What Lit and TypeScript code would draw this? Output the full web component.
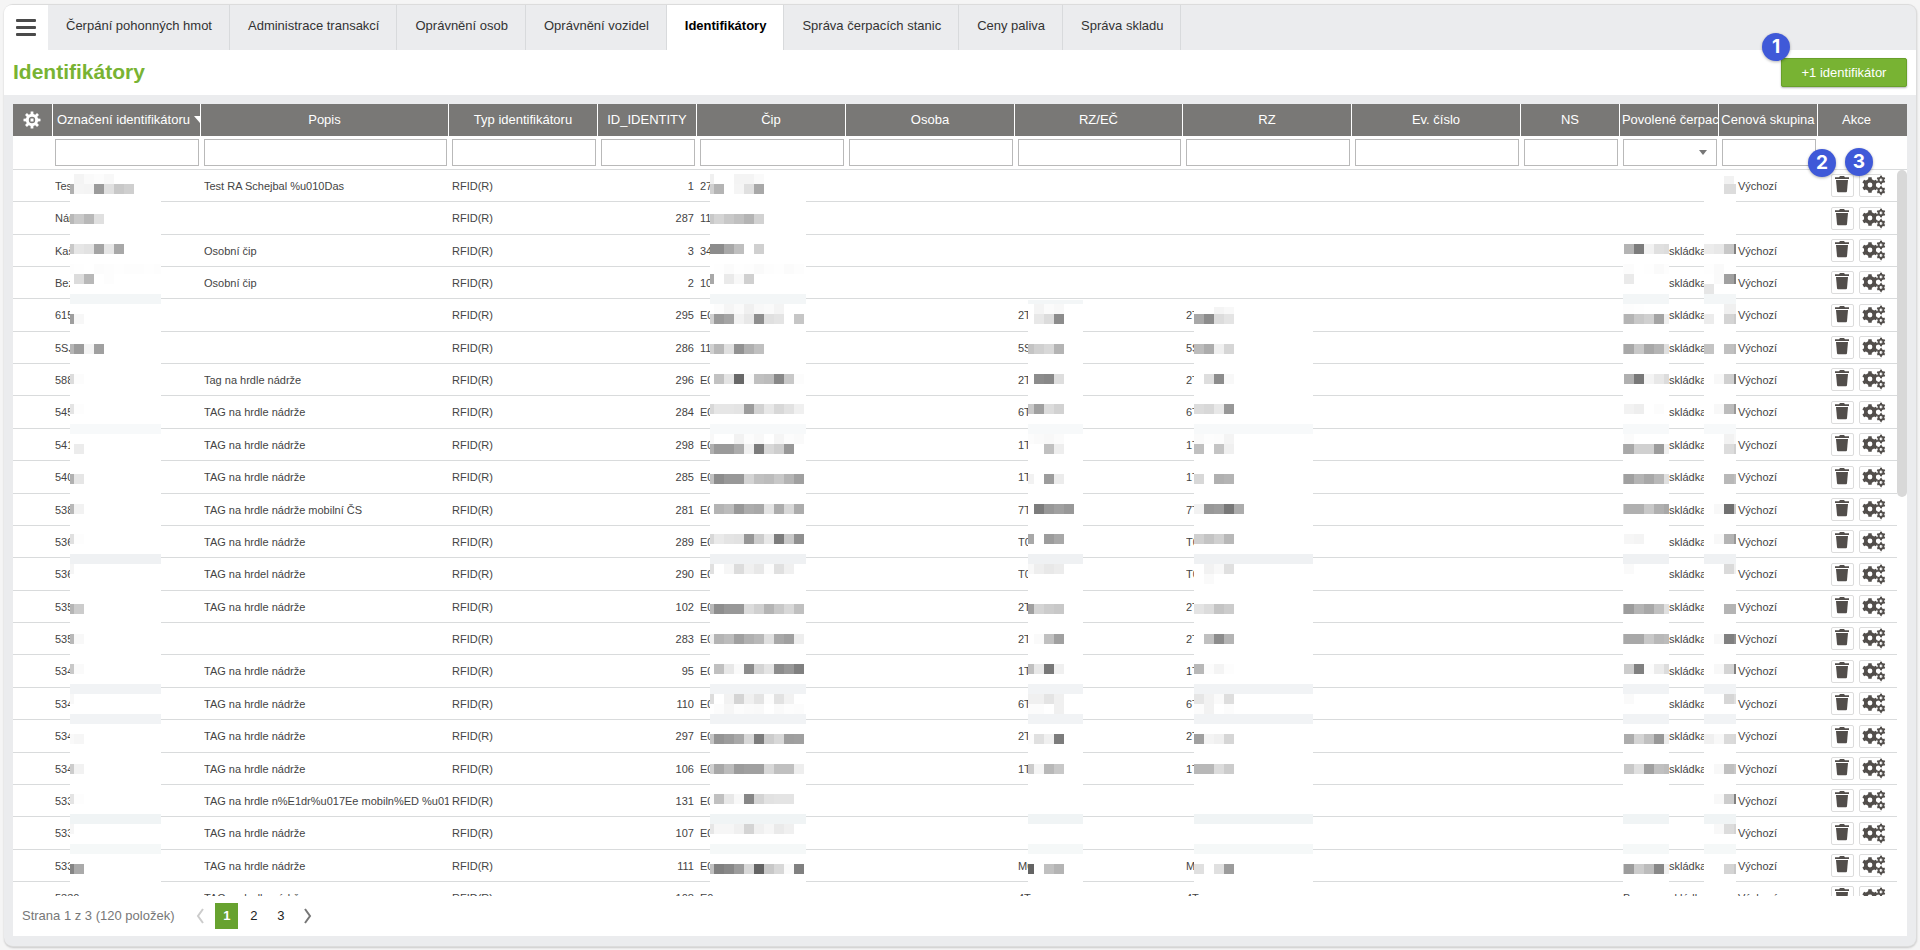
import { LitElement, html, svg, css, nothing } from "lit";
import { customElement, property } from "lit/decorators.js";
import { classMap } from "lit/directives/class-map.js";

interface Column {
  key: string;
  label: string;
  width: number;
  filter?: "text" | "select";
  sorted?: boolean;
}

const COLUMNS: Column[] = [
  { key: "gear", label: "", width: 40 },
  { key: "name", label: "Označení identifikátoru", width: 148, filter: "text", sorted: true },
  { key: "note", label: "Popis", width: 248, filter: "text" },
  { key: "type", label: "Typ identifikátoru", width: 149, filter: "text" },
  { key: "id", label: "ID_IDENTITY", width: 99, filter: "text" },
  { key: "chip", label: "Čip", width: 149, filter: "text" },
  { key: "person", label: "Osoba", width: 169, filter: "text" },
  { key: "plateNo", label: "RZ/EČ", width: 168, filter: "text" },
  { key: "plate", label: "RZ", width: 169, filter: "text" },
  { key: "evid", label: "Ev. číslo", width: 169, filter: "text" },
  { key: "ns", label: "NS", width: 99, filter: "text" },
  { key: "fuel", label: "Povolené čerpací stanice", width: 99, filter: "select" },
  { key: "price", label: "Cenová skupina", width: 99, filter: "text" },
  { key: "actions", label: "Akce", width: 89 },
];
const TOTAL = COLUMNS.reduce((sum, c) => sum + c.width, 0);

const TABS = [
  "Čerpání pohonných hmot",
  "Administrace transakcí",
  "Oprávnění osob",
  "Oprávnění vozidel",
  "Identifikátory",
  "Správa čerpacích stanic",
  "Ceny paliva",
  "Správa skladu",
];

const TAG = "TAG na hrdle nádrže";

// name, note, id, chip, plate, has station, has price group
type Row = [string, string, number, string, string, boolean, boolean];
const ROWS: Row[] = [
  ["Tes", "Test RA Schejbal %u010Das", 1, "27", "", false, true],
  ["Nár", "", 287, "11", "", false, false],
  ["Kaš", "Osobní čip", 3, "34", "", true, true],
  ["Bez", "Osobní čip", 2, "10", "", true, true],
  ["615", "", 295, "E0", "2T", true, true],
  ["5SJ", "", 286, "11", "5S", true, true],
  ["588", "Tag na hrdle nádrže", 296, "E0", "2T", true, true],
  ["545", TAG, 284, "E0", "6T", true, true],
  ["541", TAG, 298, "E0", "1T", true, true],
  ["540", TAG, 285, "E0", "1T", true, true],
  ["538", TAG + " mobilní ČS", 281, "E0", "7T", true, true],
  ["536", TAG, 289, "E0", "T0", true, true],
  ["536", "TAG na hrdel nádrže", 290, "E0", "T0", true, true],
  ["535", TAG, 102, "E0", "2T", true, true],
  ["535", "", 283, "E0", "2T", true, true],
  ["534", TAG, 95, "E0", "1T", true, true],
  ["534", TAG, 110, "E0", "6T", true, true],
  ["534", TAG, 297, "E0", "2T", true, true],
  ["534", TAG, 106, "E0", "1T", true, true],
  ["533", "TAG na hrdle n%E1dr%u017Ee mobiln%ED %u010CS", 131, "E0", "", false, true],
  ["533", TAG, 107, "E0", "", false, true],
  ["533", TAG, 111, "E0", "M0", true, true],
  ["5330", TAG, 108, "E0", "4T", true, true],
];

// Pixelated privacy masks. x is the offset inside the column, top the offset from
// the first row, first the width of the leading partial block, lines the grey levels.
interface Mask {
  x: number;
  top: number;
  width: number;
  first: number;
  lines: string;
}
const MASK_BOTTOM = 724;
const STRIPS: [number, string][] = [
  [124, "#f3f6f7"],
  [254, "#f7f9fa"],
  [384, "#eff1f3"],
  [514, "#f1f3f5"],
  [544, "#f1f3f5"],
  [644, "#f0f4f5"],
  [674, "#f5f8f8"],
];

const MASKS: Record<string, Mask> = {
  name: {
    x: 17, top: 4, width: 91, first: 4,
    lines: `4 ff f4 fa fc f8|14 b0 f5 f4 9b e0 c8 cf|44 b8 c9 b8 e0|74 c8 e6 e2 a4 e6 a8
|94 fd fe ff fc fd fe fd fd fe fd|104 ff dc b8 ff fd|144 9e f7|174 b5 9c f4 a0|204 dc fc|234 e4 fd|274 ff ec|304 b0 e6|334 b8 f2
|364 e0 fd|394 f5|434 b5 cc|464 b8 f8|494 c8 fa|524 f8|564 f9 f6|594 cc f2|624 e4 fd|654 f6|694 85 aa`,
  },
  chip: {
    x: 13, top: 4, width: 96, first: 4,
    lines: `4 f0 ff ff f4 f4 fa|14 d0 b4 ff f5 e0 a8|44 c8 d4 c8 c0 b4 d2|74 8c 8c a8 bf ff d0
|94 ff fe fb fe fd fa fd fe fb fd|104 a8 ff ea f8 d0|134 ff fc f5 fa f0 f8 fa f4|144 d0 9a a4 f2 e8 8e e0 e4 ff c6
|174 d0 b8 e0 92 b0 c0|204 ff c2 e4 68 fa c0 bc 88 c8 fc|234 d8 e6 e6 e4 9c d2 e8 d8 e2 f0
|264 f8 ff ff f2 fc f8 ff f5 fc fa|274 b0 9a 9a ac f0 7c d8 ce 98|304 c0 8c 98 98 d4 c0 bc c8 b4 a0
|334 ff b4 bc 98 ac a8 e4 ac d8 ac|364 d8 ea e4 e2 96 cc e8 7c c8 90|394 e0 ff f6 dc f0 e8 fc e0 f0
|434 b8 8e 98 98 dc d0 b4 c8 d8 c0|464 f0 b4 bc a0 b0 b8 e0 a8 a0 ee|494 ff c0 e8 fa 8c d4 e4 8c 98 80
|524 dc ff f2 d4 f0 e4 fc e2 f2|534 ff fc f6 fc fa f9 ff fa fd fc|564 c4 94 9c a8 d8 7c cc d8 9e a0
|594 d0 a8 bc 9c a0 a0 d8 c0 c0 ee|624 fa c0 e8 f8 86 d4 e2 e4 e4|654 e6 f6 f6 f0 d4 f0 f6 ea f0
|694 c0 80 88 9c d8 64 c8 d8 fa 80`,
  },
  plateNo: {
    x: 13, top: 130, width: 55, first: 6,
    lines: `134 ff f4 fb f8|144 ff e8 dc 8c|174 c4 d0 d8 b4|204 ff 8c 88 de|234 c8 a0 dc d2|264 fc fa f8 fb
|274 ff ff c0 ee|304 f2 ff 9c ec|334 ff 7c 98 a0 98|364 a8 ff 9c a8|394 f8 ee e8 ec|434 a0 d4 cc c8|464 ff fa c0 a0
|494 c0 e8 78 f0|524 f0 f0 e4 f0|534 fc fc ff f0|564 fc e0 f0 7c|594 cc f5 b8 c8|694 64 ff c0 b4`,
  },
  plate: {
    x: 11, top: 136, width: 119, first: 10,
    lines: `137 ff ff f4 f8|144 a8 8c dc e4|174 bc ac f0 d6|204 ff de 8c f8|234 dc d8 e8 98|264 fa fd fc f4
|274 c0 ff c4 f0|304 d8 ff b0 b4|334 f2 98 9c 78 ac|364 d0 c4 d0 b8|394 ff f2 f8 e0|404 ff fa|434 e4 dc c4 cc
|464 ff c0 8c b4|494 b8 fc f4 fd|524 e6 f2 fa de|534 fc f2 ff fc|564 a0 f4 f0 d6|594 b8 b8 dc cc|694 e0 ff e0 9c`,
  },
  fuel: {
    x: 3, top: 68, width: 46, first: 1,
    lines: `74 ff b4 7c f2 e0 dd|94 fd fc ff fe fa fd|104 ff ea|134 fd fd fe|144 e0 b4 c8 d0 a4 f0|174 c8 a8 c8 a8 b4 e0
|204 ff b0 78 f4 e8 dc|234 ff f2 ee ff fc|264 ff fb|274 b0 a8 d0 d0 9c f0|304 c0 a0 b4 a8 b8 e0|334 d0 b0 b0 c8 b0 a8
|364 ff f6 f4|394 ff fa|434 c0 9c b4 a8 c0 e0|464 c0 a8 a8 c8 b8 bc|494 ff cc 80 fc ec dc|524 ff fa
|564 ff ac d4 c0 98 ec|594 ff c8 e0 a0 c0 bc|694 d0 9c cc bc 88 f0`,
  },
  price: {
    x: -15, top: 6, width: 32, first: 10,
    lines: `6 ff ff f2|14 ff ff dc dc|74 ec e8 c8 80|94 fe fa ff|104 ff fa a0 80|114 e6|134 ff ff f0 f0|144 ec ff d4 cc
|174 c4 ff c0 b8|204 ff f8 d0 80|234 ff f8 bc 98|264 ff ff f2 f8|274 ff ff dc d0|304 ff ff b8 c0|334 ff f8 70 c8
|364 ff f8 b4 98|394 ff ff da f0|434 ff ff b4 b4|464 ff f8 80 90|494 ff f8 d4 80|524 ff ff d6 e0|564 f0 f8 da d8
|594 ff f8 c0 c8|624 ff f8 cc 80|654 ff f8 dc d4|694 ff ff d4 c8`,
  },
};

function gearPath(cx: number, cy: number, tip: number, root: number, hole: number, teeth: number): string {
  const step = (Math.PI * 2) / teeth;
  const at = (r: number, a: number) => `${(cx + r * Math.sin(a)).toFixed(2)} ${(cy - r * Math.cos(a)).toFixed(2)}`;
  let d = "";
  for (let i = 0; i < teeth; i++) {
    const a = i * step;
    d += `${i ? "L" : "M"}${at(root, a - step * 0.3)}L${at(tip, a - step * 0.2)}L${at(tip, a + step * 0.2)}L${at(root, a + step * 0.3)}`;
  }
  return `${d}ZM${cx - hole} ${cy}a${hole} ${hole} 0 1 0 ${hole * 2} 0a${hole} ${hole} 0 1 0 ${-hole * 2} 0Z`;
}

const SETTINGS_PATH = gearPath(9, 9, 8.6, 6.2, 3.2, 8);
const COGS_PATH =
  gearPath(8, 10, 8, 6.1, 2.4, 6) + gearPath(19, 5, 4.4, 3.4, 1.4, 6) + gearPath(19, 15.5, 4.4, 3.4, 1.4, 6);

@customElement("pixel-mask")
export class PixelMask extends LitElement {
  @property({ attribute: false }) mask!: Mask;

  static styles = css`
    :host {
      position: absolute;
      z-index: 1;
      display: block;
      pointer-events: none;
    }
    svg {
      display: block;
    }
  `;

  render() {
    const { top, width, first, lines } = this.mask;
    const height = MASK_BOTTOM - top;
    return html`<svg
      width=${width}
      height=${height}
      viewBox="0 ${top} ${width} ${height}"
      shape-rendering="crispEdges"
      aria-hidden="true"
    >
      <rect x="0" y=${top} width=${width} height=${height} fill="#fff"></rect>
      ${STRIPS.filter(([y]) => y >= top).map(
        ([y, fill]) => svg`<rect x="0" y=${y} width=${width} height="10" fill=${fill}></rect>`,
      )}
      ${top === 130 ? svg`<rect x="0" y="130" width=${width} height="4" fill="#f3f6f7"></rect>` : nothing}
      ${lines.split("|").map((line) => {
        const [y, ...levels] = line.trim().split(" ");
        return levels.map((g, i) =>
          g === "ff"
            ? nothing
            : svg`<rect x=${i === 0 ? 0 : first + (i - 1) * 10} y=${y} width=${i === 0 ? first : 10} height="10" fill=${`#${g}${g}${g}`}></rect>`,
        );
      })}
    </svg>`;
  }
}

@customElement("app-root")
export class AppRoot extends LitElement {
  static styles = css`
    :host {
      display: block;
      box-sizing: border-box;
      height: 100vh;
      padding: 4px 3px 3px 4px;
      background: #f5f5f5;
      font-family: "Liberation Sans", Arial, sans-serif;
      font-size: 13px;
      line-height: 16px;
      color: #444;
    }
    *,
    *::before {
      box-sizing: border-box;
    }
    button,
    input,
    select {
      font: inherit;
      color: inherit;
      margin: 0;
      padding: 0;
    }
    .card {
      display: flex;
      flex-direction: column;
      height: 100%;
      background: #ebecee;
      border: 1px solid #dcdcdc;
      border-left: 0;
      border-radius: 9px;
      box-shadow: 0 1px 2px rgba(0, 0, 0, 0.18);
    }
    .tabs {
      display: flex;
      flex: none;
      height: 45px;
    }
    .menu {
      flex: none;
      display: grid;
      place-items: center;
      width: 44px;
      border: 0;
      border-radius: 8px 0 0 0;
      background: #fff;
      color: #4a4a4a;
    }
    .menu svg {
      display: block;
      margin-right: 10px;
      margin-left: 10px;
    }
    .tab {
      padding: 13px 17px 0 18px;
      border-right: 1px solid #d8dadc;
      color: #333;
      text-decoration: none;
      white-space: nowrap;
    }
    .tab.active {
      background: #fff;
      color: #000;
      font-weight: bold;
    }
    .titlebar {
      display: flex;
      flex: none;
      align-items: center;
      justify-content: space-between;
      height: 45px;
      padding: 0 9px;
      background: #fff;
    }
    h1 {
      margin: 0;
      padding-bottom: 2px;
      font-size: 21px;
      line-height: 26px;
      color: #78b333;
    }
    .add-wrap {
      position: relative;
    }
    .add {
      display: block;
      width: 126px;
      height: 29px;
      border: 1px solid #68a02a;
      border-radius: 2px;
      background: #78b333;
      color: #fff;
      box-shadow: 0 1px 2px rgba(0, 0, 0, 0.3);
    }
    .badge {
      position: absolute;
      z-index: 3;
      width: 28px;
      height: 28px;
      border-radius: 50%;
      background: #3f59d8;
      color: #fff;
      font: bold 19px/28px Inter, sans-serif;
      text-align: center;
      box-shadow: 0 1px 3px rgba(0, 0, 0, 0.3);
    }
    .badge-add {
      left: -19px;
      top: -25px;
    }
    .badge-delete {
      left: -10px;
      top: 13px;
    }
    .badge-config {
      left: 27px;
      top: 12px;
    }
    .panel {
      display: flex;
      flex: 1;
      flex-direction: column;
      min-height: 0;
      margin: 9px 9px 10px;
      background: #fff;
    }
    table {
      width: 100%;
      table-layout: fixed;
      border-collapse: separate;
      border-spacing: 0;
    }
    .head {
      flex: none;
    }
    th,
    td {
      padding: 0;
      font-weight: normal;
    }
    .labels th {
      height: 32px;
      padding: 0 2px 1px;
      border-right: 1px solid #fff;
      background: #797876;
      color: #fff;
      overflow: hidden;
      white-space: nowrap;
      text-align: center;
    }
    .labels th:last-child {
      padding-right: 14px;
      border-right: 0;
    }
    .sorted {
      display: flex;
      align-items: center;
      gap: 4px;
      padding-left: 2px;
    }
    .sorted svg {
      flex: none;
    }
    .settings {
      display: grid;
      place-items: center;
      width: 100%;
      border: 0;
      background: none;
      color: #fff;
    }
    .filters td {
      position: relative;
      height: 34px;
      padding: 3px 2px 3px 3px;
      border-bottom: 1px solid #d9dbdc;
      vertical-align: top;
    }
    .filters td:nth-child(2) {
      padding-left: 2px;
    }
    .filters input,
    .filters select {
      display: block;
      width: 100%;
      height: 27px;
      padding: 0 4px;
      border: 1px solid #b9b9b9;
      border-radius: 0;
      background: #fff;
      appearance: none;
    }
    .caret {
      position: absolute;
      right: 12px;
      top: 14px;
      pointer-events: none;
    }
    .scroller {
      position: relative;
      flex: 1;
      min-height: 0;
      overflow: hidden;
    }
    .track {
      position: absolute;
      z-index: 2;
      top: 0;
      right: 0;
      bottom: 0;
      width: 10px;
      background: #fff;
    }
    .thumb {
      height: 45%;
      border-radius: 5px;
      background: #d8d8d8;
    }
    .body {
      font-size: 11px;
      line-height: 14px;
    }
    .body td {
      position: relative;
      height: 32px;
      border-bottom: 1px solid #d9dbdc;
      padding-left: 3px;
      white-space: nowrap;
    }
    .body tr:nth-child(8n + 2) td,
    .body tr:nth-child(8n + 5) td,
    .body tr:nth-child(8n + 8) td {
      height: 33px;
    }
    .text {
      overflow: hidden;
    }
    .body .name {
      padding-left: 2px;
    }
    .body .id {
      padding-right: 3px;
      text-align: right;
    }
    .lead {
      display: inline-block;
      width: 16px;
    }
    .lead.wide {
      width: 46px;
    }
    .body .actions {
      padding-left: 13px;
    }
    .buttons {
      display: flex;
      gap: 5px;
    }
    .icon {
      display: flex;
      justify-content: center;
      width: 23px;
      height: 23px;
      border: 1px solid #dcdcdc;
      border-radius: 2px;
      background: #fff;
      color: #524e4b;
    }
    .icon svg {
      flex: none;
      display: block;
    }
    .icon.config {
      justify-content: flex-start;
      padding-left: 2px;
    }
    .footer {
      display: flex;
      flex: none;
      align-items: center;
      height: 40px;
      padding-left: 9px;
      color: #777;
    }
    .pages {
      display: flex;
      gap: 4px;
      margin-left: 14px;
    }
    .pages button {
      display: grid;
      place-items: center;
      width: 23px;
      height: 26px;
      border: 0;
      background: none;
      color: #222;
    }
    .pages .current {
      background: #67a22f;
      color: #fff;
      font-weight: bold;
    }
  `;

  private cols() {
    return html`<colgroup>
      ${COLUMNS.map((c) => html`<col style="width:${(c.width / TOTAL) * 100}%" />`)}
    </colgroup>`;
  }

  private label(c: Column) {
    if (c.key === "gear")
      return html`<button class="settings" aria-label="Nastavení">
        <svg width="18" height="18" viewBox="0 0 18 18" fill="currentColor">
          <path fill-rule="evenodd" d=${SETTINGS_PATH}></path>
          <rect x="7.5" y="7.5" width="3" height="3"></rect>
        </svg>
      </button>`;
    if (c.sorted)
      return html`<div class="sorted">
        ${c.label}<svg width="12" height="7" viewBox="0 0 12 7" fill="currentColor"><path d="M0 0H12L6 7Z"></path></svg>
      </div>`;
    return c.label;
  }

  private filter(c: Column) {
    if (c.key === "actions")
      return html`<span class="badge badge-delete">2</span><span class="badge badge-config">3</span>`;
    if (c.filter === "select")
      return html`<select aria-label=${c.label}>
          <option></option>
        </select>
        <svg class="caret" width="8" height="5" viewBox="0 0 8 5"><path d="M0 0H8L4 5Z" fill="#777"></path></svg>`;
    return c.filter ? html`<input type="text" aria-label=${c.label} />` : nothing;
  }

  private cell(c: Column, row: Row) {
    const [name, note, id, chip, plate, station, price] = row;
    switch (c.key) {
      case "name":
        return name;
      case "note":
        return note;
      case "type":
        return "RFID(R)";
      case "id":
        return id;
      case "chip":
        return chip;
      case "plateNo":
      case "plate":
        return plate;
      case "fuel":
        return station ? html`<span class="lead wide">B</span>skládka` : "";
      case "price":
        return price ? html`<span class="lead"></span>Výchozí` : "";
      default:
        return "";
    }
  }

  private actions() {
    return html`<div class="buttons">
      <button class="icon" aria-label="Smazat">
        <svg width="16" height="18" viewBox="0 0 16 18" fill="currentColor">
          <path d="M1 2.2H5L6 1H10L11 2.2H15V4H1Z"></path>
          <path d="M2 5H14L13 16.2Q12.900 17.200 12 17.200H4Q3.100 17.200 3 16.200Z"></path>
        </svg>
      </button>
      <button class="icon config" aria-label="Konfigurace">
        <svg width="24" height="21" viewBox="0 0 24 21" fill="currentColor">
          <path fill-rule="evenodd" d=${COGS_PATH}></path>
        </svg>
      </button>
    </div>`;
  }

  private maskFor(key: string) {
    const mask = MASKS[key];
    return mask
      ? html`<pixel-mask .mask=${mask} style="left:${mask.x}px;top:${mask.top}px"></pixel-mask>`
      : nothing;
  }

  render() {
    return html`
      <div class="card">
        <nav class="tabs">
          <button class="menu" aria-label="Menu">
            <svg width="20" height="18" viewBox="0 0 20 18" fill="currentColor">
              <rect width="20" height="3" rx="1"></rect>
              <rect y="7" width="20" height="3" rx="1"></rect>
              <rect y="14" width="20" height="3" rx="1"></rect>
            </svg>
          </button>
          ${TABS.map(
            (t) => html`<a href="#" class=${classMap({ tab: true, active: t === "Identifikátory" })}>${t}</a>`,
          )}
        </nav>
        <header class="titlebar">
          <h1>Identifikátory</h1>
          <div class="add-wrap">
            <button class="add">+1 identifikátor</button>
            <span class="badge badge-add">1</span>
          </div>
        </header>
        <main class="panel">
          <table class="head">
            ${this.cols()}
            <thead>
              <tr class="labels">
                ${COLUMNS.map((c) => html`<th scope="col">${this.label(c)}</th>`)}
              </tr>
              <tr class="filters">
                ${COLUMNS.map((c) => html`<td>${this.filter(c)}</td>`)}
              </tr>
            </thead>
          </table>
          <div class="scroller">
            <table class="body">
              ${this.cols()}
              <tbody>
                ${ROWS.map(
                  (row, i) => html`<tr>
                    ${COLUMNS.map((c) =>
                      c.key === "actions"
                        ? html`<td class="actions">${this.actions()}</td>`
                        : html`<td class=${c.key}>
                            <div class="text">${this.cell(c, row)}</div>
                            ${i === 0 ? this.maskFor(c.key) : nothing}
                          </td>`,
                    )}
                  </tr>`,
                )}
              </tbody>
            </table>
            <div class="track"><div class="thumb"></div></div>
          </div>
          <footer class="footer">
            <span>Strana 1 z 3 (120 položek)</span>
            <div class="pages">
              <button aria-label="Předchozí">
                <svg width="8" height="18" viewBox="0 0 8 18" fill="none" stroke="#ccc" stroke-width="2">
                  <path d="M7 2L2 9L7 16"></path>
                </svg>
              </button>
              <button class="current">1</button>
              <button>2</button>
              <button>3</button>
              <button aria-label="Další">
                <svg width="8" height="18" viewBox="0 0 8 18" fill="none" stroke="#777" stroke-width="2">
                  <path d="M1 2L6 9L1 16"></path>
                </svg>
              </button>
            </div>
          </footer>
        </main>
      </div>
    `;
  }
}
